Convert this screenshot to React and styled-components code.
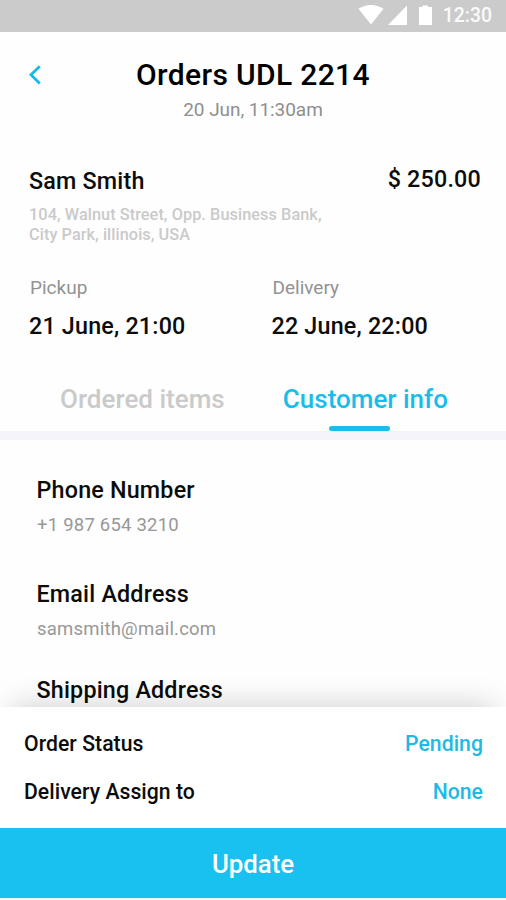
import React, { useState } from 'react';
import styled, { createGlobalStyle } from 'styled-components';

const GlobalStyle = createGlobalStyle`
  * {
    box-sizing: border-box;
  }

  body {
    margin: 0;
    background: #fff;
    font-family: Roboto, 'Liberation Sans', sans-serif;
  }

  button {
    font-family: inherit;
    border: none;
    padding: 0;
    cursor: pointer;
  }
`;

const Screen = styled.div`
  width: 506px;
  height: 900px;
  display: flex;
  flex-direction: column;
  overflow: hidden;
  background: #fefefe;
  color: #0c0c0c;
`;

const StatusBar = styled.div`
  flex: none;
  height: 32px;
  display: flex;
  align-items: center;
  justify-content: flex-end;
  padding-right: 14px;
  background: #cbcbcb;
`;

const StatusIcons = styled.svg`
  width: 76px;
  height: 22px;
  margin-right: 9px;
  margin-top: -2px;
  fill: #fff;
`;

const Clock = styled.span`
  font-size: 19.4px;
  font-weight: 500;
  line-height: 30px;
  color: #fafafa;
`;

const Header = styled.header`
  flex: none;
  display: grid;
  grid-template-columns: 72px 1fr 72px;
  padding-top: 25px;
`;

const BackButton = styled.button`
  height: 36px;
  padding-left: 26px;
  background: none;
  display: flex;
  align-items: center;
`;

const Heading = styled.div`
  text-align: center;
`;

const Title = styled.h1`
  margin: 0;
  font-size: 30px;
  font-weight: 500;
  line-height: 36px;
  letter-spacing: 0.35px;
  color: #000;
`;

const Subtitle = styled.div`
  margin-top: 5px;
  font-size: 19px;
  line-height: 24px;
  letter-spacing: -0.05px;
  color: #8f8f8f;
`;

const Summary = styled.section`
  flex: none;
  padding: 43px 25px 0 29px;
`;

const SummaryRow = styled.div`
  display: flex;
  justify-content: space-between;
  align-items: flex-start;
`;

const Customer = styled.div`
  padding-top: 2px;
`;

// Dark medium text, used for names, dates and the price
const Strong = styled.div`
  font-size: 23.3px;
  font-weight: 500;
  line-height: 28px;
  letter-spacing: 0.2px;
`;

const Address = styled.div`
  margin-top: 10px;
  font-size: 16.3px;
  font-weight: 500;
  line-height: 19.6px;
  letter-spacing: 0.06px;
  color: #cacaca;
`;

const Dates = styled.div`
  display: grid;
  grid-template-columns: 242.5px 1fr;
  margin-top: 32px;
`;

const DateLabel = styled.div`
  margin-bottom: 12px;
  padding-left: 1px;
  font-size: 19px;
  line-height: 24px;
  color: #929292;
`;

const Tabs = styled.nav`
  flex: none;
  display: flex;
  height: 100px;
  padding: 43px 58px 0 60px;
  justify-content: space-between;
  border-bottom: 9px solid #f4f4fa;
`;

const Tab = styled.button`
  height: 48px;
  display: flex;
  flex-direction: column;
  align-items: center;
  justify-content: space-between;
  background: none;
  font-size: 26px;
  font-weight: 500;
  line-height: 32px;
  color: ${props => (props.$active ? '#19bdea' : '#cacaca')};

  &::after {
    content: '';
    width: 61px;
    height: 5px;
    margin-right: 12px;
    border-radius: 3px;
    background: ${props => (props.$active ? '#16bfea' : 'transparent')};
  }
`;

const Details = styled.section`
  flex: 1;
  min-height: 0;
  padding: 36px 36.5px 0;
  overflow: hidden;
`;

const Detail = styled.div`
  margin-bottom: ${props => props.$gap}px;
`;

const DetailValue = styled.div`
  margin-top: 9px;
  padding-left: 0.5px;
  font-size: 18.5px;
  line-height: 24px;
  letter-spacing: 0.22px;
  color: #989898;
`;

const Sheet = styled.section`
  flex: none;
  position: relative;
  height: 121px;
  padding: 24px 23px 0 24px;
  background: #fff;
  box-shadow: 0 -14px 28px -12px rgba(0, 0, 0, 0.18);
`;

const SheetRow = styled.div`
  display: flex;
  justify-content: space-between;
  margin-bottom: 22px;
  font-size: 21.2px;
  font-weight: 500;
  line-height: 26px;
  letter-spacing: 0.04px;
`;

const SheetValue = styled.span`
  color: #1fb9e6;
`;

const UpdateButton = styled.button`
  flex: none;
  position: relative;
  height: 72px;
  padding-top: 2px;
  border-bottom: 2px solid #e9f9fe;
  background: #18c1ef;
  color: #fff;
  font-size: 25.8px;
  font-weight: 500;
`;

const tabs = ['Ordered items', 'Customer info'];

const details = [
  { label: 'Phone Number', value: '+1 987 654 3210', gap: 43 },
  { label: 'Email Address', value: 'samsmith@mail.com', gap: 35 },
  { label: 'Shipping Address', value: '', gap: 0 },
];

const App = () => {
  const [activeTab, setActiveTab] = useState('Customer info');

  return (
    <>
      <GlobalStyle />
      <Screen>
        <StatusBar>
          <StatusIcons viewBox="0 0 76 22">
            <path d="M0.5 4.8 C8 -0.3 18 -0.3 25.5 4.8 L13 20.5 Z" />
            <path d="M49 1.5 V21 H30 Z" />
            <path d="M61 3 H64.5 V1.5 H70 V3 H74 V21 H61 Z" />
          </StatusIcons>
          <Clock>12:30</Clock>
        </StatusBar>

        <Header>
          <BackButton aria-label="Back">
            <svg width="16" height="22" viewBox="0 0 16 22" fill="none" stroke="#16b9ea" strokeWidth="2.8">
              <path d="M13.8 2.2 L5 10.8 L13.8 19.4" />
            </svg>
          </BackButton>
          <Heading>
            <Title>Orders UDL 2214</Title>
            <Subtitle>20 Jun, 11:30am</Subtitle>
          </Heading>
        </Header>

        <Summary>
          <SummaryRow>
            <Customer>
              <Strong>Sam Smith</Strong>
              <Address>
                104, Walnut Street, Opp. Business Bank,
                <br />
                City Park, illinois, USA
              </Address>
            </Customer>
            <Strong>$ 250.00</Strong>
          </SummaryRow>
          <Dates>
            <div>
              <DateLabel>Pickup</DateLabel>
              <Strong>21 June, 21:00</Strong>
            </div>
            <div>
              <DateLabel>Delivery</DateLabel>
              <Strong>22 June, 22:00</Strong>
            </div>
          </Dates>
        </Summary>

        <Tabs>
          {tabs.map(tab => (
            <Tab key={tab} $active={tab === activeTab} onClick={() => setActiveTab(tab)}>
              {tab}
            </Tab>
          ))}
        </Tabs>

        <Details>
          {details.map(item => (
            <Detail key={item.label} $gap={item.gap}>
              <Strong>{item.label}</Strong>
              {item.value && <DetailValue>{item.value}</DetailValue>}
            </Detail>
          ))}
        </Details>

        <Sheet>
          <SheetRow>
            Order Status
            <SheetValue>Pending</SheetValue>
          </SheetRow>
          <SheetRow>
            Delivery Assign to
            <SheetValue>None</SheetValue>
          </SheetRow>
        </Sheet>
        <UpdateButton>Update</UpdateButton>
      </Screen>
    </>
  );
};

export default App;
